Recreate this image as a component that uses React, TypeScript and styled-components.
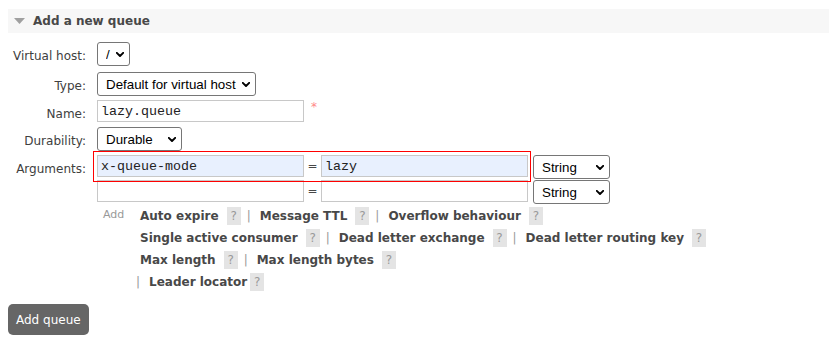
import React from 'react';
import styled, { createGlobalStyle } from 'styled-components';

const GlobalStyle = createGlobalStyle`
  html, body { margin: 0; padding: 0; background: #fff; }
  body {
    font-family: "DejaVu Sans", Verdana, sans-serif;
    font-size: 12px;
    color: #484848;
  }
`;

const Page = styled.div`
  padding: 9px 0 0 8px;
`;

const SectionHeader = styled.div`
  display: flex;
  align-items: center;
  gap: 8px;
  height: 24px;
  padding-left: 6px;
  background: #f7f7f7;
  font-weight: bold;
  font-size: 12px;
  color: #484848;
`;

const Form = styled.div`
  display: flex;
  flex-direction: column;
  padding-top: 9px;
`;

const Row = styled.div<{ $top: number }>`
  display: grid;
  grid-template-columns: 82px 1fr;
  column-gap: 7px;
  align-items: start;
  margin-top: ${(p) => p.$top}px;
`;

const Label = styled.div<{ $h: number }>`
  display: flex;
  align-items: center;
  justify-content: flex-end;
  height: ${(p) => p.$h}px;
  padding: 3px 4px 0 0;
  box-sizing: border-box;
  white-space: nowrap;
  color: #404040;
`;

const Cell = styled.div`
  display: flex;
  align-items: center;
`;

const SelectWrap = styled.span<{ $w: number }>`
  position: relative;
  display: inline-flex;
  width: ${(p) => p.$w}px;
  flex: none;
`;

const NativeSelect = styled.select`
  appearance: none;
  -webkit-appearance: none;
  width: 100%;
  height: 24px;
  box-sizing: border-box;
  margin: 0;
  padding: 0 18px 0 8px;
  border: 1px solid #767676;
  border-radius: 3px;
  background: #fff;
  font-family: "Liberation Sans", Arial, sans-serif;
  font-size: 13.33px;
  color: #000;
  outline: none;
`;

const Chevron = styled.svg`
  position: absolute;
  right: 6px;
  top: 50%;
  margin-top: -2px;
  pointer-events: none;
`;

const TextInput = styled.input<{ $filled?: boolean }>`
  width: 207px;
  height: 22px;
  box-sizing: border-box;
  margin: 0;
  padding: 0 3px;
  border: 1px solid #c8c8c8;
  background: ${(p) => (p.$filled ? '#e8f0fe' : '#fff')};
  font-family: "Liberation Mono", "Courier New", monospace;
  font-size: 13.33px;
  color: #222;
  outline: none;
  flex: none;
`;

const Mandatory = styled.span`
  align-self: flex-start;
  padding-left: 7px;
  color: #f88;
  font-size: 12px;
  line-height: 14px;
`;

const ArgTable = styled.div`
  display: flex;
  flex-direction: column;
  gap: 1px;
`;

const ArgRow = styled.div`
  display: flex;
  align-items: flex-start;
`;

const Pair = styled.div<{ $marked?: boolean }>`
  position: relative;
  display: flex;
  align-items: center;
  &::after {
    content: '';
    display: ${(p) => (p.$marked ? 'block' : 'none')};
    position: absolute;
    z-index: 2;
    left: -4px;
    top: -4px;
    right: -3px;
    bottom: -5px;
    border: 1px solid #ff0000;
    pointer-events: none;
  }
`;

const Equals = styled.span`
  width: 17px;
  text-align: center;
  color: #484848;
`;

const TypeSlot = styled.div`
  margin-left: 5px;
`;

const AddBlock = styled.div`
  display: flex;
  margin-top: 1px;
`;

const AddLabel = styled.div`
  width: 43px;
  box-sizing: border-box;
  padding: 3px 0 0 6px;
  font-size: 11px;
  color: #999;
`;

const Links = styled.div`
  display: flex;
  flex-direction: column;
`;

const LinkLine = styled.div<{ $indent?: number }>`
  display: flex;
  align-items: center;
  height: 22px;
  margin-left: ${(p) => p.$indent ?? 0}px;
  white-space: nowrap;
`;

const ArgLink = styled.span`
  font-weight: bold;
  color: #484848;
`;

const Help = styled.span<{ $gap?: number }>`
  display: inline-flex;
  align-items: center;
  justify-content: center;
  width: 14px;
  height: 18px;
  margin-left: ${(p) => p.$gap ?? 8}px;
  background: #e4e4e4;
  color: #999;
  font-size: 12px;
`;

const Sep = styled.span`
  margin: 0 9px 0 6px;
  color: #999;
`;

const LeadSep = styled.span`
  margin-right: 9px;
  color: #999;
`;

const SubmitButton = styled.button`
  margin-top: 11px;
  height: 31px;
  padding: 0 8px;
  border: none;
  border-radius: 5px;
  background: #666;
  color: #fff;
  font-family: "DejaVu Sans", Verdana, sans-serif;
  font-size: 12px;
  cursor: pointer;
  align-self: flex-start;
`;

const Triangle = () => (
  <svg width="11" height="6" viewBox="0 0 11 6">
    <polygon points="0,0 11,0 5.5,6" fill="#a0a0a0" />
  </svg>
);

const Select = ({ w, options }: { w: number; options: string[] }) => (
  <SelectWrap $w={w}>
    <NativeSelect defaultValue={options[0]}>
      {options.map((o) => (
        <option key={o} value={o}>
          {o}
        </option>
      ))}
    </NativeSelect>
    <Chevron width="8" height="5" viewBox="0 0 8 5">
      <path d="M0.8 0.8 L4 4 L7.2 0.8" fill="none" stroke="#000" strokeWidth="1.9" strokeLinecap="round" strokeLinejoin="round" />
    </Chevron>
  </SelectWrap>
);

type LinkItem = { text: string; gap?: number };

const lines: { items: LinkItem[]; lead?: boolean }[] = [
  { items: [{ text: 'Auto expire' }, { text: 'Message TTL' }, { text: 'Overflow behaviour' }] },
  { items: [{ text: 'Single active consumer' }, { text: 'Dead letter exchange' }, { text: 'Dead letter routing key' }] },
  { items: [{ text: 'Max length' }, { text: 'Max length bytes' }] },
  { items: [{ text: 'Leader locator', gap: 3 }], lead: true },
];

export default function App() {
  return (
    <>
      <GlobalStyle />
      <Page>
        <SectionHeader>
          <Triangle />
          <span>Add a new queue</span>
        </SectionHeader>
        <Form>
          <Row $top={0}>
            <Label $h={24}>Virtual host:</Label>
            <Cell>
              <Select w={33} options={['/']} />
            </Cell>
          </Row>
          <Row $top={6}>
            <Label $h={24}>Type:</Label>
            <Cell>
              <Select w={159} options={['Default for virtual host', 'Classic', 'Quorum', 'Stream']} />
            </Cell>
          </Row>
          <Row $top={4}>
            <Label $h={24}>Name:</Label>
            <Cell>
              <TextInput type="text" value="lazy.queue" readOnly />
              <Mandatory>*</Mandatory>
            </Cell>
          </Row>
          <Row $top={3}>
            <Label $h={24}>Durability:</Label>
            <Cell>
              <Select w={85} options={['Durable', 'Transient']} />
            </Cell>
          </Row>
          <Row $top={4}>
            <Label $h={24}>Arguments:</Label>
            <div>
              <ArgTable>
                <ArgRow>
                  <Pair $marked>
                    <TextInput type="text" $filled value="x-queue-mode" readOnly />
                    <Equals>=</Equals>
                    <TextInput type="text" $filled value="lazy" readOnly />
                  </Pair>
                  <TypeSlot>
                    <Select w={77} options={['String', 'Number', 'Boolean', 'List']} />
                  </TypeSlot>
                </ArgRow>
                <ArgRow>
                  <Pair>
                    <TextInput type="text" value="" readOnly />
                    <Equals>=</Equals>
                    <TextInput type="text" value="" readOnly />
                  </Pair>
                  <TypeSlot>
                    <Select w={77} options={['String', 'Number', 'Boolean', 'List']} />
                  </TypeSlot>
                </ArgRow>
              </ArgTable>
              <AddBlock>
                <AddLabel>Add</AddLabel>
                <Links>
                  {lines.map((line, li) => (
                    <LinkLine key={li} $indent={line.lead ? -4 : 0}>
                      {line.lead && <LeadSep>|</LeadSep>}
                      {line.items.map((it, i) => (
                        <React.Fragment key={it.text}>
                          {i > 0 && <Sep>|</Sep>}
                          <ArgLink>{it.text}</ArgLink>
                          <Help $gap={it.gap}>?</Help>
                        </React.Fragment>
                      ))}
                    </LinkLine>
                  ))}
                </Links>
              </AddBlock>
            </div>
          </Row>
          <SubmitButton>Add queue</SubmitButton>
        </Form>
      </Page>
    </>
  );
}
